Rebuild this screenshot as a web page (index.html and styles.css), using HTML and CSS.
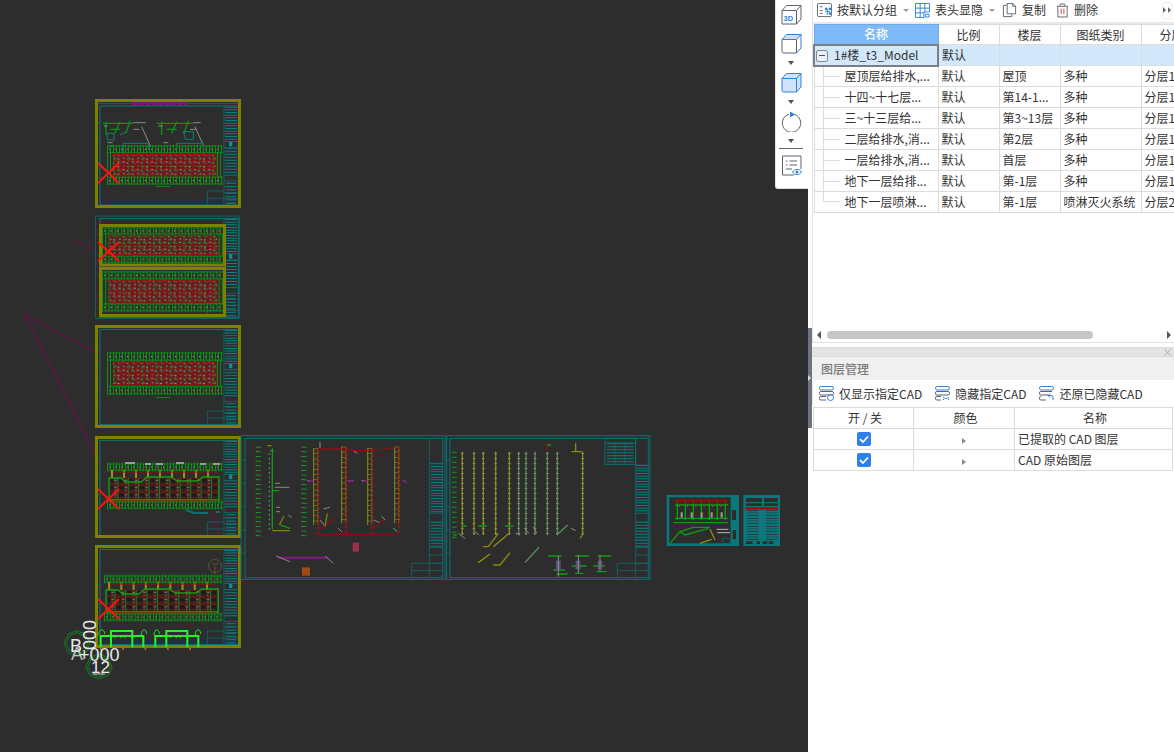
FILE: index.html
```html
<!DOCTYPE html>
<html lang="zh-CN">
<head>
<meta charset="utf-8">
<title>图纸管理</title>
<link rel="stylesheet" href="styles.css">
</head>
<body>
<div class="app">
  <main class="canvas">
    <svg class="cad" viewBox="0 0 808 752" width="808" height="752">
      <defs>
        <pattern id="pRed" width="23" height="13" patternUnits="userSpaceOnUse" patternTransform="scale(.62)">
          <rect width="23" height="13" fill="#4a2626"/>
          <rect y="0" width="23" height="1.200" fill="#a00a0a"/>
          <rect y="6.500" width="23" height="1" fill="#930b0b"/>
          <rect x="0" width="1.200" height="13" fill="#a00a0a"/>
          <rect x="7" width="1" height="13" fill="#930b0b"/>
          <rect x="15" width="1.100" height="13" fill="#930b0b"/>
          <rect x="11" width="1.100" height="13" fill="#0c8018"/>
          <rect x="19" width="1" height="7" fill="#0c8018"/>
          <rect x="2" y="2" width="3.500" height="2" fill="#8f8f8f"/>
          <rect x="8.500" y="3.500" width="2" height="2" fill="#9a9a9a"/>
          <rect x="16.500" y="2" width="2.500" height="2" fill="#858585"/>
          <rect x="3" y="8.500" width="2.500" height="2" fill="#909090"/>
          <rect x="12.500" y="9" width="2" height="2" fill="#8f8f8f"/>
          <rect x="17" y="10" width="3" height="2" fill="#9a9a9a"/>
          <rect x="9" y="10" width="1.500" height="1.500" fill="#b08c28"/>
          <rect x="20.500" y="4" width="1.500" height="1.500" fill="#b08c28"/>
        </pattern>
        <pattern id="pDark" width="13" height="9" patternUnits="userSpaceOnUse" patternTransform="scale(.8)">
          <rect width="13" height="9" fill="#3a2222"/>
          <rect x="2" y="2" width="6" height="4" fill="#1d1a1a"/>
          <rect width="13" height="1" fill="#9a0a0a"/>
          <rect width="1" height="9" fill="#0c8d18"/>
          <rect x="9" y="3" width="3" height="1.200" fill="#929292"/>
          <rect x="9.500" y="6.500" width="1.500" height="1.200" fill="#b08c28"/>
        </pattern>
        <g id="plan">
          <path class="ptk" stroke-dasharray="1 2" d="M0 4.500H116M0 37.500H116"/>
          <path class="ptk2" stroke-dasharray="1 5" d="M2 4.500H116M2 37.500H116"/>
          <path class="ptks" stroke-dasharray="1 2" d="M0 21H6M110 21H116"/>
          <rect x="6" y="9" width="104" height="24" fill="url(#pRed)"/>
          <path class="gr" d="M0 1H116M0 8H116M0 34H116M0 41H116"/>
          <path class="rd" d="M6 10H110M6 21.500H110M6 32H110"/>
        </g>
        <g id="plan2">
          <path class="ptk" stroke-dasharray="1 2" d="M0 4H116M0 42H116"/>
          <path class="ptk2" stroke-dasharray="1 5" d="M2 4H116M2 42H116"/>
          <path class="yv" stroke-dasharray="2 10" d="M4 11H112"/>
          <rect x="4" y="15" width="108" height="22" fill="url(#pDark)"/>
          <path class="gr2" d="M2 15H14L18 19H34L40 14H64L70 18H90L96 14H112V37H2Z"/>
          <path class="rd" d="M6 9H110M6 38H110"/>
          <path class="gr" d="M0 1H116M0 7H116M0 39H116M0 45H116"/>
        </g>
        <g id="sheet">
          <rect class="te" x="2" y="13" width="431" height="307"/>
          <rect class="te2" x="15" y="20" width="415" height="297"/>
          <path class="te" d="M15 70h-7M15 130h-7M15 190h-7M15 250h-7"/>
          <path class="tb" stroke-dasharray="3 5" d="M408 22V127"/>
          <path class="tb" stroke-dasharray="3 6" d="M408 145V228"/>
          <path class="te" d="M387 20V317M387 127H430M387 145H430M387 228H430M387 245H430M387 262H430M387 280H430M337 275H387M337 275V317M337 297H430"/>
          <path class="tbs" stroke-dasharray="4 6" d="M408 250V316"/>
          <rect class="tfill" x="402" y="127" width="10" height="14"/>
        </g>
        <g id="ticks">
          <path class="tk" stroke-dasharray="2 12" d="M50 50V322"/>
          <path class="grt" stroke-dasharray="3 11" d="M57 50V322"/>
        </g>
        <g id="ladder">
          <path class="yl" d="M0 0V230M13 0V230"/>
          <path class="ylr" stroke-dasharray="1.500 14" d="M6 0V230"/>
          <path class="rdd" stroke-dasharray="9 4" d="M14 0V258"/>
          <path class="rdr" stroke-dasharray="2 16" d="M14 4V258"/>
        </g>
        <g id="riser">
          <path class="yl2" d="M0 0V250"/>
          <path class="wht" stroke-dasharray="2 13" d="M0 4V250"/>
        </g>
        <g id="riserg">
          <path class="pg" d="M0 0V250"/>
          <path class="wht" stroke-dasharray="2 13" d="M0 4V250"/>
        </g>
      </defs>

      <rect class="bg" width="808" height="752"/>

      <!-- stray construction lines -->
      <path class="mg" d="M74 240L96 250M23 314L95 352M25 315L99 462M212 513L220 533"/>

      <!-- sheets 1 to 5 -->
      <use href="#sheet" transform="translate(95 99.300) scale(.3333)"/>
      <use href="#sheet" transform="translate(95 211.700) scale(.3333)"/>
      <use href="#sheet" transform="translate(95 323) scale(.3333 .32)"/>
      <use href="#sheet" transform="translate(95 434) scale(.3333 .32)"/>
      <use href="#sheet" transform="translate(95 543) scale(.3333 .32)"/>

      <!-- sheet 1 details -->
      <path class="pu" stroke-dasharray="5 1.500" d="M132 103.500H187"/>
      <g transform="translate(20 90) scale(.3333)">
        <path class="gr3" d="M248 100H340M258 95V135M300 95L285 130M330 92L318 130M410 100H520M425 95V135M470 95L455 130M505 92L492 130M272 118H300M440 118H470"/>
        <path class="te3" d="M262 130H282V150H262ZM320 125L300 135M490 125H520V148H497Z"/>
        <path class="gy3" d="M340 98H378M365 110L392 170M520 98H542M525 110L552 170M262 158H278M268 168H280M430 158H445M340 118H358M510 118H530M252 108H262M415 108H428"/>
        <path class="te3" d="M310 190V160H385V180M470 190V160H550V180"/>
      </g>
      <use href="#plan" transform="translate(107 145) scale(1 .95)"/>
      <path class="gr" d="M156 186.500h14"/>

      <!-- sheet 2 -->
      <use href="#plan" transform="translate(102 227) scale(1.060 .86)"/>
      <use href="#plan" transform="translate(102 271) scale(1.060 .97)"/>
      <rect class="ol" x="100.500" y="225.500" width="124" height="39.500"/>
      <rect class="ol" x="100.500" y="268.500" width="124" height="47"/>

      <!-- sheet 3 -->
      <use href="#plan" transform="translate(107 352) scale(1 1.020)"/>
      <path class="gr" d="M156 397.500h14"/>

      <!-- sheet 4 -->
      <use href="#plan2" transform="translate(107 463) scale(1 1)"/>
      <path class="gy3t" d="M125 463h10M145 464h6M156 464h7M176 463h8M200 464h6M213 464h7"/>
      <path class="te" d="M186 510l8 3h14M216 512h4"/>

      <!-- sheet 5 -->
      <use href="#plan2" transform="translate(104 575) scale(1.020 1)"/>
      <circle class="brown" cx="215" cy="566" r="6.500"/>
      <path class="brown" d="M212 564h6M215 566v8"/>

      <!-- olive selection frames -->
      <rect class="ol" x="96.500" y="100.500" width="143" height="106"/>
      <rect class="ol" x="96.500" y="326.500" width="143" height="100"/>
      <rect class="ol" x="96.500" y="437.500" width="143" height="99"/>
      <rect class="ol" x="96.500" y="546.500" width="143" height="100"/>

      <!-- red crosses -->
      <path class="x" d="M98 163L119 183M119 163L98 183"/>
      <path class="x" d="M98 242L119 261M119 242L98 261"/>
      <path class="x" d="M98 489L119 509M119 489L98 509"/>
      <path class="x" d="M98 599L119 619M119 599L98 619"/>

      <!-- axis bubbles and lime pipes -->
      <g transform="translate(50 530) scale(.3333)">
        <path class="lime" d="M152 352V318H280V352M183 352V303H247V352M316 352V318H445V352M349 352V303H412V352"/>
        <path class="limet" d="M146 315C146 295 164 295 164 312M274 315C274 295 290 295 290 312M312 315C312 295 328 295 328 312M436 315C436 295 452 295 452 312"/>
        <path class="gy3" d="M195 325C200 315 210 315 214 325M225 325C230 315 240 315 245 325M360 325C365 315 375 315 380 325M390 325C395 315 405 315 410 325"/>
        <path class="or" stroke-dasharray="5 62" d="M150 357H450"/>
        <path class="ax" d="M80 302L105 312L120 340L110 365L80 378L55 368L42 340L55 312Z"/>
        <path class="ax" d="M80 308L100 316L114 340L105 360L80 372L60 362L48 340L60 316Z"/>
        <path class="ax" d="M147 372L172 382L187 412L175 436L147 447L120 436L107 412L120 382Z"/>
        <path class="ax" d="M147 378L168 387L181 412L170 431L147 441L124 431L113 412L124 387Z"/>
        <path class="wl" d="M128 432H164"/>
      </g>
      <text class="ct" x="70" y="652">B</text>
      <text class="ct dim" x="71" y="660">A</text>
      <text class="ct" transform="translate(96 650) rotate(-90)">000</text>
      <text class="ct" x="79" y="661">+000</text>
      <text class="ct s" x="91" y="673">12</text>

      <!-- sheet 6 -->
      <g transform="translate(240 430) scale(.3333)">
        <rect class="te4" x="3" y="17" width="612" height="431"/>
        <rect class="te4" x="15" y="25" width="593" height="418"/>
        <path class="te" d="M3 90h12M3 160h12M3 230h12M3 300h12M3 370h12"/>
        <path class="tb" stroke-dasharray="3 5" d="M590 100V250"/>
        <path class="tb" stroke-dasharray="3 6" d="M590 275V350"/>
        <path class="te" d="M568 25V443M568 100H608M568 250H608M568 330H608M568 352H608M568 375H608M568 400H608M515 400H608M515 400V443M515 422H608"/>
        <use href="#ticks"/>
        <use href="#ticks" transform="translate(137)"/>
        <path class="gr5" d="M97 55V298M118 182H97M120 285L150 295M90 62H102"/>
        <path class="ol3" d="M97 302H150M132 258L118 285M82 47H95"/>
        <path class="gy3" stroke-dasharray="5 9" d="M88 70V300"/>
        <path class="gy3" d="M105 160H120M105 172H148M108 232H120M108 245H120M145 255L155 262M240 35V55M335 60L352 70M202 152H220M325 152H340M365 152H382M490 150L500 160M250 237L270 232M425 258L435 270M240 270L252 285M400 270L420 278M295 295L305 305M460 295L472 305"/>
        <use href="#ladder" transform="translate(221 55)"/>
        <use href="#ladder" transform="translate(305 50)"/>
        <use href="#ladder" transform="translate(383 55)"/>
        <use href="#ladder" transform="translate(464 50)"/>
        <path class="rdt" d="M235 57H300L340 62H400L465 52M225 314H465M240 298L285 265M395 300L430 270"/>
        <path class="ol3" d="M255 290L262 250"/>
        <path class="pu3" d="M115 383H265M205 155L220 150M370 155L382 150M325 155L338 152M490 155L500 155"/>
        <path class="gy3" d="M108 378L150 395M255 378L280 400"/>
        <rect class="pk" x="338" y="338" width="19" height="27"/>
        <rect class="orf" x="186" y="412" width="24" height="25"/>
      </g>

      <!-- sheet 7 -->
      <g transform="translate(445 430) scale(.3333)">
        <rect class="te4" x="5" y="17" width="610" height="431"/>
        <rect class="te4" x="15" y="25" width="595" height="418"/>
        <path class="te" d="M5 90h10M5 160h10M5 230h10M5 300h10M5 370h10"/>
        <rect class="te4" x="480" y="25" width="92" height="78"/>
        <path class="tb2" stroke-dasharray="3 6" d="M526 40V100"/>
        <path class="te" d="M480 38H572M510 38V103M540 38V103"/>
        <path class="tb" stroke-dasharray="3 5" d="M591 105V250"/>
        <path class="tb" stroke-dasharray="3 6" d="M591 275V350"/>
        <path class="te" d="M572 25V443M572 105H610M572 250H610M572 330H610M572 352H610M572 375H610M572 400H610M517 400H610M517 400V443M517 422H610"/>
        <path class="grt2" stroke-dasharray="3 12" d="M28 65V332"/>
        <use href="#riser" transform="translate(52 65)"/>
        <use href="#riser" transform="translate(87 65)"/>
        <use href="#riser" transform="translate(115 65)"/>
        <use href="#riser" transform="translate(152 65)"/>
        <use href="#riser" transform="translate(193 65)"/>
        <use href="#riserg" transform="translate(221 65)"/>
        <use href="#riserg" transform="translate(243 65)"/>
        <use href="#riserg" transform="translate(270 65)"/>
        <use href="#riserg" transform="translate(307 65)"/>
        <use href="#riserg" transform="translate(337 65)"/>
        <use href="#riser" transform="translate(413 65)"/>
        <path class="yl2" d="M115 350H130L160 310M145 350L190 312M405 325L415 310M380 65H410M392 40V65M100 398L135 372M145 405H165L195 368"/>
        <path class="pg" d="M335 315L368 285M240 398L282 352"/>
        <path class="gr5" d="M100 288H125M180 288H205M305 45H318M50 288H65M25 315H35"/>
        <path class="rdt" d="M305 38V62"/>
        <path class="gy3" d="M40 310L60 325M90 305L102 315M212 310L225 315M238 295L252 310M265 290L275 310M378 295L392 302"/>
        <path class="gr5" d="M310 378H350M335 432H368M325 420H360M380 408H425M390 378H432M445 408H480M458 378H498M390 430H415M455 425H485"/>
        <rect class="pv" x="333" y="392" width="14" height="30"/>
        <rect class="pv" x="392" y="392" width="14" height="26"/>
        <rect class="pv" x="458" y="392" width="14" height="26"/>
        <path class="gy3" d="M340 378V440M400 375V430M465 375V425"/>
      </g>

      <!-- sheets 8 and 9 -->
      <g transform="translate(660 490) scale(.3333)">
        <rect class="tf" x="20" y="15" width="217" height="153"/>
        <rect class="bg" x="28" y="22" width="184" height="138"/>
        <rect class="bg" x="216" y="60" width="12" height="30"/>
        <rect class="bg" x="218" y="120" width="10" height="28"/>
        <path class="s8r" d="M45 32H205"/>
        <path class="s8g" stroke-dasharray="4 20" d="M50 65H205"/>
        <path class="gr5" d="M45 45H205M45 85H205M40 98H205"/>
        <path class="s8w" stroke-dasharray="6 24" d="M62 75H205"/>
        <path class="s8m" stroke-dasharray="3 22" d="M56 48H205"/>
        <path class="gr5" d="M30 160L60 125L100 112H150M60 125L75 135L145 115"/>
        <path class="yl2" d="M120 160L155 148M150 118L165 150"/>
        <path class="wl2" d="M170 118H205M172 128H210"/>
        <path class="te" d="M188 145H212V160H188Z"/>
      </g>
      <g transform="translate(660 490) scale(.3333)">
        <rect class="tf" x="250" y="15" width="110" height="153"/>
        <rect class="bg" x="258" y="24" width="48" height="12"/>
        <rect class="bg" x="312" y="24" width="42" height="12"/>
        <rect class="bg" x="258" y="40" width="48" height="8"/>
        <rect class="bg" x="312" y="40" width="42" height="8"/>
        <path class="rdt2" d="M256 55H355"/>
        <path class="bgl" stroke-dasharray="2 6" d="M278 60V150"/>
        <path class="bgl" stroke-dasharray="2 6" d="M335 60V150"/>
        <rect class="bg" x="258" y="154" width="20" height="8"/>
        <rect class="bg" x="290" y="154" width="10" height="8"/>
        <rect class="bg" x="308" y="154" width="14" height="8"/>
        <rect class="bg" x="326" y="154" width="14" height="8"/>
      </g>
    </svg>
  </main>

  <aside class="panel">
    <div class="tbar">
      <svg class="ti" viewBox="0 0 16 16"><rect class="i-g" x=".5" y=".5" width="15" height="14" rx="1.500"/><path class="i-g" d="M3 4h3M3 8h3M3 11h3"/><path class="i-b" d="M9 9h5M11 6.500v6"/><rect class="i-bf" x="8.500" y="5" width="2.500" height="2.500"/><rect class="i-bf" x="12.500" y="5" width="2.500" height="2.500"/><rect class="i-bf" x="12.500" y="10" width="2.500" height="2.500"/></svg>
      <span class="tl">按默认分组</span>
      <i class="dn"></i>
      <svg class="ti" viewBox="0 0 16 16"><path class="i-b" d="M.5.5h15v9h-6v6h-9zM.5 5.500h15M5.500.5v15M10.500.5v9M.5 10.500h9"/><path class="i-b" d="M11 12h4v3h-4z"/></svg>
      <span class="tl">表头显隐</span>
      <i class="dn"></i>
      <svg class="ti t3" viewBox="0 0 16 16"><path class="i-g" d="M5 2.500H1.500v12h9V12"/><path class="i-g" d="M5.500.5h6l3 3v8h-9zM11.500.5v3h3"/></svg>
      <span class="tl">复制</span>
      <svg class="ti t4" viewBox="0 0 14 16"><path class="i-g" d="M1 3.500h12M4.500 3V1h5v2M2 3.500v11.500h10V3.500"/><path class="i-r" d="M5.500 6v6M8.500 6v6"/></svg>
      <span class="tl">删除</span>
      <span class="more"><svg viewBox="0 0 8 6" width="8" height="6"><path class="i-m" d="M0 0l3 3-3 3zM5 0l3 3-3 3z"/></svg></span>
    </div>

    <div class="gridbox">
      <table class="grid">
        <colgroup><col class="c1"><col class="c2"><col class="c3"><col class="c4"><col class="c5"></colgroup>
        <thead>
          <tr><th class="hname">名称</th><th>比例</th><th>楼层</th><th>图纸类别</th><th class="hleft">分层</th></tr>
        </thead>
        <tbody>
          <tr class="root"><td class="rootname"><span class="minus"></span>1#楼_t3_Model</td><td>默认</td><td></td><td></td><td></td></tr>
          <tr><td class="leaf">屋顶层给排水,...</td><td>默认</td><td>屋顶</td><td>多种</td><td>分层1</td></tr>
          <tr><td class="leaf">十四~十七层...</td><td>默认</td><td>第14-1...</td><td>多种</td><td>分层1</td></tr>
          <tr><td class="leaf">三~十三层给...</td><td>默认</td><td>第3~13层</td><td>多种</td><td>分层1</td></tr>
          <tr><td class="leaf">二层给排水,消...</td><td>默认</td><td>第2层</td><td>多种</td><td>分层1</td></tr>
          <tr><td class="leaf">一层给排水,消...</td><td>默认</td><td>首层</td><td>多种</td><td>分层1</td></tr>
          <tr><td class="leaf">地下一层给排...</td><td>默认</td><td>第-1层</td><td>多种</td><td>分层1</td></tr>
          <tr><td class="leaf last">地下一层喷淋...</td><td>默认</td><td>第-1层</td><td>喷淋灭火系统</td><td>分层2</td></tr>
        </tbody>
      </table>
    </div>

    <div class="hscroll">
      <i class="al"></i>
      <div class="track"><div class="thumb"></div></div>
      <i class="ar"></i>
    </div>

    <div class="closebar"><svg class="close" viewBox="0 0 7 7"><path d="M.5.5l6 6M6.500.5l-6 6"/></svg></div>
    <div class="ptitle">图层管理</div>
    <div class="ltools">
      <span class="lt"><svg class="li" viewBox="0 0 15 15"><rect class="i-b" x=".5" y=".5" width="14" height="3.500" rx="1.700"/><path class="i-g" d="M2 5.500h11a1.500 1.500 0 0 1 0 3.500H2A1.500 1.500 0 0 1 2 5.500zM2 10.500h5M2 10.500a1.500 1.500 0 0 0 0 3.500h5"/><circle class="i-b" cx="11.500" cy="11.500" r="3"/></svg>仅显示指定CAD</span>
      <span class="lt"><svg class="li" viewBox="0 0 15 15"><rect class="i-b" x=".5" y=".5" width="14" height="3.500" rx="1.700"/><path class="i-g" d="M2 5.500h11a1.500 1.500 0 0 1 0 3.500H2A1.500 1.500 0 0 1 2 5.500zM2 10.500h4M2 10.500a1.500 1.500 0 0 0 0 3.500h4"/><path class="i-b" d="M8 11c2 2 4 2 6 0M9 13l-1 1M13 13l1 1"/></svg>隐藏指定CAD</span>
      <span class="lt"><svg class="li" viewBox="0 0 15 15"><rect class="i-b" x=".5" y=".5" width="14" height="3.500" rx="1.700"/><path class="i-g" d="M2 5.500h11M2 9h7M2 5.500a1.700 1.700 0 0 0 0 3.500M2 10.500a1.700 1.700 0 0 0 0 3.500h5"/><path class="i-b" d="M14 14v-2.500a2 2 0 0 0-2-2H9M11 7.500l-2 2 2 2"/></svg>还原已隐藏CAD</span>
    </div>
    <table class="layers">
      <colgroup><col class="l1"><col class="l2"><col class="l3"></colgroup>
      <thead><tr><th>开 / 关</th><th>颜色</th><th>名称</th></tr></thead>
      <tbody>
        <tr><td class="ctr"><svg class="cb" viewBox="0 0 14 14"><rect class="cbb" width="14" height="14" rx="2"/><path class="cbc" d="M3 7.200l3 2.800 5-5.500"/></svg></td><td class="ctr"><i class="tri"></i></td><td>已提取的 CAD 图层</td></tr>
        <tr><td class="ctr"><svg class="cb" viewBox="0 0 14 14"><rect class="cbb" width="14" height="14" rx="2"/><path class="cbc" d="M3 7.200l3 2.800 5-5.500"/></svg></td><td class="ctr"><i class="tri"></i></td><td>CAD 原始图层</td></tr>
      </tbody>
    </table>
  </aside>

  <nav class="vtools">
    <svg class="vi" viewBox="0 0 21 21"><path class="i-g" d="M1 6.500L5.500 1.500H20V15L15.500 20H1zM1 6.500H15.500V20M15.500 6.500L20 1.500"/><text class="t3d" x="2.500" y="16.500">3D</text></svg>
    <svg class="vi vb" viewBox="0 0 21 21"><path class="i-l" d="M1 6.500L5.500 1.500H20L15.500 6.500z"/><path class="i-g" d="M15.500 7V20H2.500a1.500 1.500 0 0 1-1.500-1.500V7"/><path class="i-b" d="M1 6.500L5.500 1.500H20V15L15.500 20M1 6.500H15.500M15.500 6.500L20 1.500"/></svg>
    <i class="vdn"></i>
    <svg class="vi" viewBox="0 0 21 21"><path class="i-f" d="M1 6.500L5.500 1.500H20V15L15.500 20H2.500a1.500 1.500 0 0 1-1.500-1.500zM1 6.500H15.500V20M15.500 6.500L20 1.500"/></svg>
    <i class="vdn"></i>
    <svg class="vi" viewBox="0 0 21 21"><path class="i-g" d="M8 3.200A9.200 9.200 0 1 0 13 3.200"/><path class="i-bf" d="M9 .5l5 3-5 3z"/></svg>
    <i class="vdn"></i>
    <hr class="vsep">
    <svg class="vi" viewBox="0 0 21 21"><path class="i-g" d="M13 20H1.500V1H20V14"/><path class="i-g" d="M5 6h1.500M8.500 6H16M5 10h1.500M8.500 10H16M5 14h6"/><path class="i-b" d="M11.500 17c2.500-3.500 7-3.500 9 0c-2 3.500-6.500 3.500-9 0z"/><circle class="i-bf" cx="16" cy="17" r="1.500"/></svg>
  </nav>

  <div class="handle"><i class="ha"></i></div>
</div>
</body>
</html>
```
FILE: styles.css
```css
* { box-sizing: border-box; }
html, body { margin: 0; height: 100%; background: #fff; overflow: hidden; }
body { font: 12px/1 "Noto Sans CJK SC", "Liberation Sans", sans-serif; color: #333; }
.app { position: relative; display: flex; width: 1174px; height: 752px; overflow: hidden; }
.canvas { flex: 0 0 808px; height: 752px; background: #2d2d2d; }
.cad { display: block; }

/* CAD drawing */
.bg { fill: #2d2d2d; }
.te, .te2, .te3, .te4, .gr, .gr2, .gr3, .gr5, .rd, .rdt, .rdt2, .rdd, .rdr, .gy3, .gy3t, .mg, .ol, .ol3, .x, .lime, .limet, .or, .ax, .wl, .wl2, .tb, .tb2, .tbs, .tk, .grt, .grt2, .yl, .yl2, .ylr, .yv, .wht, .pg, .pu, .pu3, .brown, .bgl, .ptk, .ptk2, .ptks, .s8r, .s8g, .s8w, .s8m { fill: none; }
.te { stroke: #0d6f74; stroke-width: 2.200; }
.te2 { stroke: #0c7479; stroke-width: 3; }
.te3 { stroke: #0e7c80; stroke-width: 3; }
.te4 { stroke: #0a7073; stroke-width: 3; }
.tb { stroke: #0a8084; stroke-width: 36; }
.tb2 { stroke: #0f7d80; stroke-width: 80; }
.tbs { stroke: #0a7478; stroke-width: 30; }
.tfill { fill: #0e8f93; }
.tf { fill: #09787b; }
.bgl { stroke: #2d2d2d; stroke-width: 34; }
.gr { stroke: #0b8f12; stroke-width: .9; }
.gr2 { stroke: #12a012; stroke-width: 1.300; }
.gr3 { stroke: #0d9216; stroke-width: 4; }
.gr5 { stroke: #0d9c12; stroke-width: 4; }
.grt { stroke: #0b9a12; stroke-width: 12; }
.grt2 { stroke: #0b9a12; stroke-width: 14; }
.tk { stroke: #8c8c8c; stroke-width: 6; }
.ptk { stroke: #0c8f14; stroke-width: 9; }
.ptk2 { stroke: #8a9a8a; stroke-width: 1.200; }
.ptks { stroke: #0c8f14; stroke-width: 26; }
.yv { stroke: #a88a14; stroke-width: 8; }
.rd { stroke: #a00c0c; stroke-width: 1; }
.rdt { stroke: #8d1010; stroke-width: 4; }
.rdt2 { stroke: #9a0d0d; stroke-width: 7; }
.rdd { stroke: #96100f; stroke-width: 4; }
.rdr { stroke: #a01c1c; stroke-width: 9; }
.gy3 { stroke: #8c8c84; stroke-width: 3; }
.gy3t { stroke: #9a9a9a; stroke-width: 2; }
.mg { stroke: #7c0a52; stroke-width: 1; }
.ol { stroke: #808000; stroke-width: 3; }
.ol3 { stroke: #808010; stroke-width: 4; }
.x { stroke: #ff1111; stroke-width: 2; }
.lime { stroke: #22f522; stroke-width: 6; }
.limet { stroke: #22e022; stroke-width: 3; }
.or { stroke: #d98032; stroke-width: 5; }
.ax { stroke: #128a22; stroke-width: 2.500; }
.wl { stroke: #ddd; stroke-width: 3; }
.wl2 { stroke: #bbb; stroke-width: 3; }
.yl { stroke: #7f7f14; stroke-width: 3.500; }
.ylr { stroke: #9a9a20; stroke-width: 13; }
.yl2 { stroke: #8c8c10; stroke-width: 4; }
.pg { stroke: #5a8c5a; stroke-width: 4; }
.wht { stroke: #96967c; stroke-width: 8; }
.pu { stroke: #8a0a92; stroke-width: 3; }
.pu3 { stroke: #801a80; stroke-width: 6; }
.pk { fill: #a03048; }
.orf { fill: #a04c10; }
.pv { fill: #5b4f80; }
.brown { stroke: #5e5030; stroke-width: 1; }
.s8r { stroke: #8d1010; stroke-width: 9; }
.s8g { stroke: #0d9c12; stroke-width: 50; }
.s8w { stroke: #8fa08f; stroke-width: 16; }
.s8m { stroke: #b030a0; stroke-width: 6; }
.ct { fill: #e8e8e8; font: 300 18px "Liberation Sans", sans-serif; }
.ct.s { font-size: 17px; }
.ct.dim { opacity: .75; }

/* right panel */
.panel { flex: 0 0 366px; width: 366px; min-width: 0; height: 752px; display: flex; flex-direction: column; background: #fff; padding-left: 4px; }
.tbar { flex: 0 0 24px; display: flex; align-items: center; border-left: 1px solid #e3e3e3; border-bottom: 2px solid #e8e8e8; padding: 0 2px 2px 4px; }
.ti { width: 15px; height: 15px; flex: none; }
.tl { margin-left: 5px; white-space: nowrap; }
.t3 { margin-left: 1px; }
.t4 { margin-left: 10px; width: 13px; }
.dn { width: 0; height: 0; margin: 0 6px; border: 3px solid transparent; border-top: 3px solid #999; border-bottom: 0; flex: none; }
.more { margin-left: auto; width: 10px; height: 17px; display: flex; align-items: center; justify-content: center; border: 1px solid #eee; border-radius: 3px; flex: none; }
.i-m { fill: #666; }

.gridbox { flex: 0 0 303px; min-width: 0; overflow: hidden; border-left: 1px solid #e3e3e3; }
.grid, .layers { table-layout: fixed; border-collapse: collapse; }
.grid { width: 370px; }
.c1 { width: 124px; } .c2 { width: 61px; } .c3 { width: 61px; } .c4 { width: 81px; } .c5 { width: 43px; }
.grid th, .grid td { height: 21px; padding: 0 0 0 3px; border: 1px solid #dcdcdc; font-weight: 400; white-space: nowrap; overflow: hidden; text-align: left; color: #333; }
.grid th { height: 20px; text-align: center; padding: 0; }
.grid .hleft { text-align: left; padding-left: 18px; }
.grid .hname { background: #7eb9f8; color: #fff; font-weight: 500; border-color: #6fa9ea; }
.root td { background: #d4e8fc; }
.grid .rootname { border: 2px solid #7a7f85; padding-left: 1px; }
.minus { display: inline-block; vertical-align: -2px; width: 12px; height: 12px; margin-right: 6px; border: 1px solid #888; border-radius: 2px; position: relative; background: #eaf3fd; }
.minus::after { content: ""; position: absolute; left: 2px; right: 2px; top: 4px; height: 1px; background: #555; }
.grid .leaf { position: relative; padding-left: 30px; }
.leaf::before { content: ""; position: absolute; left: 8px; top: -1px; bottom: -1px; width: 17px; background: linear-gradient(#ddd, #ddd) left top / 1px 100% no-repeat, linear-gradient(#ddd, #ddd) left center / 100% 1px no-repeat; }
.leaf.last::before { bottom: 50%; background: linear-gradient(#ddd, #ddd) left top / 1px 100% no-repeat, linear-gradient(#ddd, #ddd) left bottom / 100% 1px no-repeat; }

.hscroll { flex: 0 0 16px; display: flex; align-items: center; border-left: 1px solid #e3e3e3; border-bottom: 1px solid #e3e3e3; }
.al, .ar { flex: none; width: 0; height: 0; border: 4px solid transparent; }
.al { border-right: 4px solid #555; border-left: 0; margin-left: 4px; }
.ar { border-left: 4px solid #555; border-right: 0; margin-right: 3px; }
.track { flex: 1; padding: 0 6px; }
.thumb { width: 266px; height: 8px; border-radius: 4px; background: #c6c6c6; }

.closebar { flex: 0 0 10px; margin-top: 4px; background: #e3e3e3; border-top: 1px solid #dcdcdc; border-bottom: 1px solid #d8d8d8; position: relative; }
.close { position: absolute; right: 3px; top: 1px; width: 7px; height: 7px; fill: none; stroke: #a5a5a5; stroke-width: 1; }
.ptitle { flex: 0 0 23px; padding-left: 9px; background: #f0f0f0; color: #7c7c7c; line-height: 23px; font-weight: 500; }
.ltools { flex: 0 0 27px; display: flex; align-items: center; gap: 13px; padding-left: 6px; background: #fff; border-radius: 4px; border-left: 1px solid #e6e6e6; }
.lt { display: flex; align-items: center; gap: 5px; white-space: nowrap; }
.li { width: 15px; height: 15px; flex: none; }
.layers { width: 360px; margin-left: 1px; border-top: 1px solid #e0e0e0; }
.l1 { width: 100px; }
.l2 { width: 101px; }
.layers th, .layers td { height: 21px; padding: 0 0 0 3px; border: 1px solid #dcdcdc; font-weight: 400; color: #333; }
.layers th { text-align: center; }
.layers td.ctr { text-align: center; padding: 0; }
.cb { width: 14px; height: 14px; display: block; margin: auto; }
.cbb { fill: #2f80ed; }
.cbc { fill: none; stroke: #fff; stroke-width: 1.800; }
.tri { display: inline-block; width: 0; height: 0; border: 3.500px solid transparent; border-left: 4px solid #8a8a8a; border-right: 0; }

/* icon strokes */
.i-g { fill: none; stroke: #5c6570; stroke-width: 1; }
.i-b { fill: none; stroke: #2f7fdc; stroke-width: 1; }
.i-l { fill: #c9e0f8; stroke: none; }
.i-r { fill: none; stroke: #d83a3a; stroke-width: 1; }
.i-bf { fill: #2f7fdc; }
.i-f { fill: #cfe3fa; stroke: #2f7fdc; stroke-width: 1; }
.t3d { font: 700 7.500px "Liberation Sans", sans-serif; fill: #2f7fdc; }

/* floating view tools */
.vtools { position: absolute; left: 775px; top: 0; width: 33px; height: 189px; display: flex; flex-direction: column; align-items: center; background: #fff; border-left: 1px solid #e4e4e4; border-bottom: 1px solid #ddd; border-radius: 0 0 0 3px; padding-top: 4px; padding-right: 2px; }
.vi { width: 21px; height: 21px; flex: none; }
.vb { margin-top: 8px; }
.vdn { flex: none; width: 0; height: 0; margin: 7px 0; border: 3.500px solid transparent; border-top: 4px solid #555; border-bottom: 0; }
.vsep { flex: none; width: 24px; height: 1px; margin: -2px 0 6px; border: 0; background: #666; }

.handle { position: absolute; left: 808px; top: 328px; width: 4px; height: 100px; background: #6c7680; display: flex; align-items: center; }
.ha { width: 0; height: 0; border: 3px solid transparent; border-left: 3px solid #ddd; border-right: 0; }
```
